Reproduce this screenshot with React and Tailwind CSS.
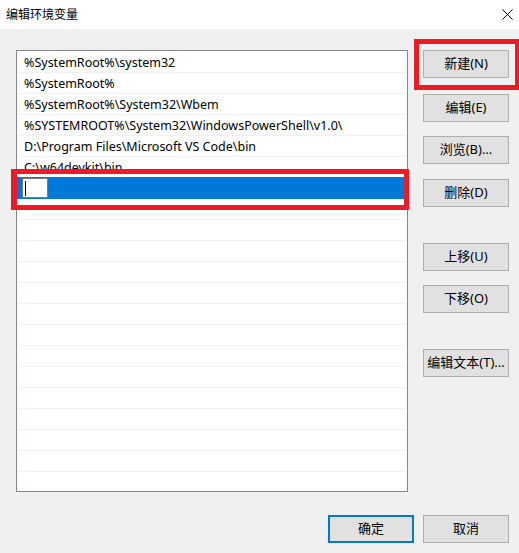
import React from "react";

const paths = [
  "%SystemRoot%\\system32",
  "%SystemRoot%",
  "%SystemRoot%\\System32\\Wbem",
  "%SYSTEMROOT%\\System32\\WindowsPowerShell\\v1.0\\",
  "D:\\Program Files\\Microsoft VS Code\\bin",
  "C:\\w64devkit\\bin",
];

const font = { fontFamily: '"Segoe UI", "Noto Sans", "Noto Sans CJK SC", sans-serif' };

function Btn({ children, className = "" }) {
  return (
    <div
      className={`w-[86px] h-[28px] bg-[#e1e1e1] border border-[#adadad] flex items-center justify-center text-[13px] text-black ${className}`}
    >
      {children}
    </div>
  );
}

export default function App() {
  const empty = Array.from({ length: 14 });
  return (
    <div
      className="relative w-[519px] h-[553px] bg-[#f0f0f0] flex flex-col overflow-hidden"
      style={font}
    >
      {/* title bar */}
      <div className="h-[29px] bg-white flex items-center justify-between pl-[6px] pr-[6px] shrink-0">
        <span className="text-[12px] text-black leading-none">编辑环境变量</span>
        <svg width="11" height="11" viewBox="0 0 11 11">
          <path d="M0.5 0.5 L10.5 10.5 M10.5 0.5 L0.5 10.5" stroke="#000" strokeWidth="1" />
        </svg>
      </div>

      <div className="flex flex-row">
        {/* list */}
        <div className="ml-[16px] mt-[21px] w-[392px] h-[442px] bg-white border border-[#828790] pt-[1px] overflow-hidden">
          {paths.map((p, i) => (
            <div
              key={i}
              className="h-[21px] mx-[1px] border-b border-[#f0f0f0] flex items-center pl-[6px] text-[12.5px] text-black whitespace-nowrap"
            >
              <span className="translate-y-[1px]">{p}</span>
            </div>
          ))}
          <div className="-mt-[1px] h-[22px] bg-[#0078d7] flex items-start">
            <div className="ml-[5px] mt-[1px] w-[26px] h-[20px] bg-white border border-[#7a7a7a] flex items-center pl-[2px]">
              <div className="w-[1px] h-[15px] bg-black" />
            </div>
          </div>
          {empty.map((_, i) => (
            <div key={i} className="h-[21px] mx-[1px] border-b border-[#f0f0f0]" />
          ))}
        </div>

        {/* buttons */}
        <div className="ml-[15px] flex flex-col">
          <Btn className="mt-[21px]">新建(N)</Btn>
          <Btn className="mt-[16px]">编辑(E)</Btn>
          <Btn className="mt-[14px]">浏览(B)...</Btn>
          <Btn className="mt-[15px]">删除(D)</Btn>
          <Btn className="mt-[36px]">上移(U)</Btn>
          <Btn className="mt-[14px]">下移(O)</Btn>
          <Btn className="mt-[36px]">编辑文本(T)...</Btn>
        </div>
      </div>

      {/* bottom buttons */}
      <div className="mt-[23px] flex flex-row justify-end pr-[10px] gap-[9px]">
        <div className="w-[86px] h-[28px] bg-[#e1e1e1] border-2 border-[#0078d7] flex items-center justify-center text-[13px] text-black">
          确定
        </div>
        <Btn>取消</Btn>
      </div>

      {/* red highlight boxes */}
      <div className="absolute left-[414px] top-[39px] w-[106px] h-[51px] border-[5px] border-[#ed1c24] pointer-events-none" />
      <div className="absolute left-[11px] top-[169px] w-[398px] h-[41px] border-[5px] border-l-[6px] border-[#ed1c24] pointer-events-none" />
    </div>
  );
}
